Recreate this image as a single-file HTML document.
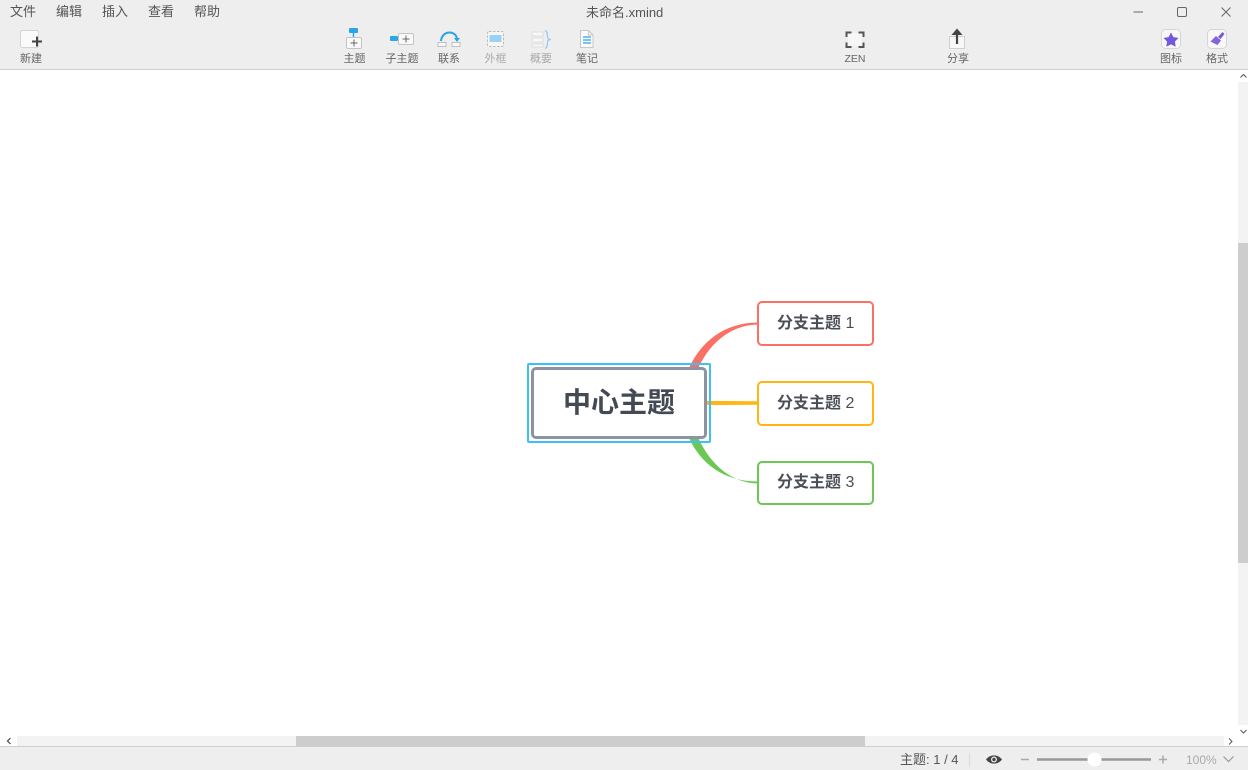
<!DOCTYPE html>
<html lang="zh">
<head>
<meta charset="utf-8">
<title>未命名.xmind</title>
<style>
html,body{margin:0;padding:0;width:1248px;height:770px;overflow:hidden;background:#fff;}
body{position:relative;font-family:"Liberation Sans","Noto Sans CJK SC",sans-serif;color:#4a4a4a;}
.abs{position:absolute;}
.t{position:absolute;white-space:nowrap;line-height:1;}
.menu{top:5px;font-size:13px;color:#555;}
.lab{top:54px;font-size:11px;color:#666;transform:translateX(-50%);}
.dis{color:#aaa;}
.node{position:absolute;box-sizing:border-box;background:#fff;border-radius:5px;border:2px solid;width:117px;height:45px;left:757px;}
.nt{position:absolute;left:777px;font-size:16px;font-weight:700;color:#4a4f57;white-space:nowrap;line-height:1;}
.nt span{font-weight:400;}
</style>
</head>
<body>
<div class="abs" style="left:0;top:0;width:1248px;height:69px;background:#eeeeef;"></div>
<div class="abs" style="left:0;top:69px;width:1248px;height:1px;background:#cfcfcf;"></div>

<div class="t menu" style="left:10px;">文件</div>
<div class="t menu" style="left:56px;">编辑</div>
<div class="t menu" style="left:102px;">插入</div>
<div class="t menu" style="left:148px;">查看</div>
<div class="t menu" style="left:194px;">帮助</div>
<div class="t" style="left:586px;top:6px;font-size:13px;color:#555;">未命名.xmind</div>

<svg class="abs" style="left:0;top:0" width="1248" height="70" viewBox="0 0 1248 70" fill="none">
  <!-- window controls -->
  <path d="M1133.500 12H1143" stroke="#666" stroke-width="1"/>
  <rect x="1177.500" y="7.500" width="9" height="9" rx="1.500" stroke="#666"/>
  <path d="M1221.500 7.500l9 9M1230.500 7.500l-9 9" stroke="#666"/>

  <!-- new -->
  <rect x="20.500" y="30.500" width="18" height="17" rx="2" fill="#fafafa" stroke="#d4d4d4"/>
  <path d="M32 41.500h10M37 36.500v10" stroke="#444" stroke-width="2"/>

  <!-- topic -->
  <rect x="349" y="28" width="9" height="5" rx="1" fill="#2ba5e8"/>
  <path d="M353.500 33v5" stroke="#2ba5e8" stroke-width="1.500"/>
  <rect x="346.500" y="37.500" width="15" height="11" rx="1.500" fill="#f9f9f9" stroke="#c4c4c4"/>
  <path d="M350.500 43h7M354 39.500v7" stroke="#666"/>

  <!-- subtopic -->
  <rect x="390" y="36" width="8" height="5" rx="1" fill="#2ba5e8"/>
  <path d="M398 38.500h3" stroke="#999"/>
  <rect x="398.500" y="33.500" width="15" height="11" rx="1.500" fill="#f9f9f9" stroke="#c4c4c4"/>
  <path d="M402.500 39h7M406 35.500v7" stroke="#666"/>

  <!-- relation -->
  <rect x="438" y="42.500" width="8" height="4" fill="#f9f9f9" stroke="#c0c0c0"/>
  <rect x="452" y="42.500" width="8" height="4" fill="#f9f9f9" stroke="#c0c0c0"/>
  <path d="M441 41C442 30 456 30 457 39" stroke="#2ba5e8" stroke-width="2"/>
  <path d="M454 38h6l-3 4z" fill="#2ba5e8"/>

  <!-- boundary -->
  <rect x="487.500" y="31.500" width="16" height="15" rx="1.500" fill="#f6f6f6" stroke="#bbb" stroke-dasharray="2.500 1.500"/>
  <rect x="489.500" y="35" width="12" height="7" fill="#9ad2f4"/>

  <!-- summary -->
  <rect x="532" y="32" width="11" height="4" fill="#f8f8f8" stroke="#dedede"/>
  <rect x="532" y="38" width="11" height="4" fill="#f8f8f8" stroke="#dedede"/>
  <rect x="532" y="44" width="11" height="3" fill="#f8f8f8" stroke="#dedede"/>
  <path d="M545 30.500C548 31 547 36 548 38.500l2 1-2 1C547 43 548 48 545 48.500" stroke="#97cdf2" stroke-width="1.300"/>

  <!-- note -->
  <path d="M580.500 30.500h8l4.500 4.500v12.500h-12.500z" fill="#fbfbfb" stroke="#c8c8c8"/>
  <path d="M588.500 30.500v4.500h4.500" stroke="#c8c8c8"/>
  <path d="M583 37h8M583 40h8M583 43h8" stroke="#2ba5e8" stroke-width="1.200"/>

  <!-- zen -->
  <rect x="848" y="33" width="14" height="13" fill="#f7f7f7"/>
  <path d="M846.500 37v-4.500h5M858.500 32.500h5V37M863.500 42.500v4.500h-5M851.500 47h-5v-4.500" stroke="#555" stroke-width="2"/>

  <!-- share -->
  <path d="M949.500 36.500h15v12h-15z" fill="#f8f8f8" stroke="#d0d0d0"/>
  <path d="M957 44V32" stroke="#444" stroke-width="2.200"/>
  <path d="M951.500 35l5.500-6.500 5.500 6.500z" fill="#444"/>

  <!-- icon button -->
  <rect x="1161.500" y="29.500" width="19" height="19" rx="4" fill="#f8f8f8" stroke="#d6d6d6"/>
  <path d="M1171 32.500l2.400 4.600 5.100.8-3.600 3.700.8 5.100-4.700-2.300-4.700 2.300.8-5.100-3.600-3.700 5.100-.8z" fill="#7357e0"/>

  <!-- format -->
  <rect x="1207.500" y="29.500" width="19" height="19" rx="4" fill="#f8f8f8" stroke="#d6d6d6"/>
  <path d="M1216 36l5 4.500-3.500 4.500-7-3.500z" fill="#8463dc"/>
  <path d="M1218 37l4.500-5 2 2-4 5z" fill="#7357e0"/>
</svg>

<div class="t lab" style="left:31px;">新建</div>
<div class="t lab" style="left:354.500px;">主题</div>
<div class="t lab" style="left:402px;">子主题</div>
<div class="t lab" style="left:449px;">联系</div>
<div class="t lab dis" style="left:495.500px;">外框</div>
<div class="t lab dis" style="left:541px;">概要</div>
<div class="t lab" style="left:587px;">笔记</div>
<div class="t lab" style="left:855px;font-size:10.500px;top:54px;">ZEN</div>
<div class="t lab" style="left:958px;">分享</div>
<div class="t lab" style="left:1171px;">图标</div>
<div class="t lab" style="left:1217px;">格式</div>

<!-- scrollbars -->
<div class="abs" style="left:1238px;top:70px;width:10px;height:666px;background:#f3f3f3;"></div>
<div class="abs" style="left:1238px;top:243px;width:10px;height:320px;background:#cdcdcd;"></div>
<div class="abs" style="left:1238px;top:70px;width:10px;height:12px;background:#fff;"></div>
<div class="abs" style="left:1238px;top:725px;width:10px;height:11px;background:#fff;"></div>
<div class="abs" style="left:0;top:736px;width:1238px;height:10px;background:#f3f3f3;"></div>
<div class="abs" style="left:296px;top:736px;width:569px;height:10px;background:#cdcdcd;"></div>
<div class="abs" style="left:0;top:736px;width:17px;height:10px;background:#fff;"></div>
<div class="abs" style="left:1224px;top:736px;width:24px;height:10px;background:#fff;"></div>

<svg class="abs" style="left:0;top:70px" width="1248" height="680" viewBox="0 70 1248 680" fill="none">
  <path d="M1240.500 77.500l3-3 3 3" stroke="#555"/>
  <path d="M1240.500 730l3 3 3-3" stroke="#555"/>
  <path d="M10.500 738l-3 3 3 3" stroke="#444" stroke-width="1.200"/>
  <path d="M1229 738.500l3 3-3 3" stroke="#555"/>

  <!-- connectors -->
  <path d="M689 368C701 342 724 322.500 758 322.500V324.500C729 325 708 345 697 371z" fill="#fb7064"/>
  <path d="M706 401h16l36 .300v3.400l-36 .300h-16z" fill="#ffb612"/>
  <path d="M689 438C701 464 724 481.500 758 481.500V483.500C729 483 708 461 697 435z" fill="#6dc755"/>
</svg>

<!-- central -->
<div class="abs" style="left:527px;top:363px;width:184px;height:80px;box-sizing:border-box;border:2px solid #3cc1f5;border-radius:2px;"></div>
<div class="abs" style="left:531px;top:367px;width:176px;height:72px;box-sizing:border-box;border:3px solid #8d93a3;border-radius:5px;background:#fff;"></div>
<div class="t" style="left:563px;top:389px;font-size:28px;font-weight:700;color:#434a53;">中心主题</div>

<!-- branches -->
<div class="node" style="top:301px;border-color:#fb7064;"></div>
<div class="nt" style="top:316px;">分支主题 <span>1</span></div>
<div class="node" style="top:381px;border-color:#ffb612;"></div>
<div class="nt" style="top:396px;">分支主题 <span>2</span></div>
<div class="node" style="top:461px;border-color:#6dc755;height:44px;"></div>
<div class="nt" style="top:475px;">分支主题 <span>3</span></div>

<!-- status bar -->
<div class="abs" style="left:0;top:746px;width:1248px;height:1px;background:#cfcfcf;"></div>
<div class="abs" style="left:0;top:747px;width:1248px;height:23px;background:#eeeeef;"></div>
<div class="t" style="left:900px;top:753px;font-size:13px;color:#555;">主题: 1 / 4</div>
<div class="abs" style="left:969px;top:753px;width:1px;height:14px;background:#dcdcdc;"></div>
<svg class="abs" style="left:980px;top:747px" width="200" height="23" viewBox="980 747 200 23" fill="none">
  <path d="M986 759.500C990 754 998 754 1002 759.500C998 765 990 765 986 759.500z" fill="#444"/>
  <circle cx="994" cy="759.500" r="3" fill="#eeeeef"/>
  <circle cx="994" cy="759.500" r="1.700" fill="#444"/>
  <path d="M1021 759.500h8" stroke="#aaa" stroke-width="1.500"/>
  <path d="M1037 759.500h114" stroke="#999" stroke-width="2.500"/>
  <circle cx="1094.500" cy="759.500" r="7" fill="#fff"/>
  <path d="M1159 759.500h8M1163 755.500v8" stroke="#aaa" stroke-width="1.500"/>
</svg>
<div class="t" style="left:1186px;top:754px;font-size:12px;color:#aaa;">100%</div>
<svg class="abs" style="left:1222px;top:753px" width="14" height="12" fill="none"><path d="M1.500 3.500l5 5 5-5" stroke="#999" stroke-width="1.200"/></svg>
</body>
</html>
